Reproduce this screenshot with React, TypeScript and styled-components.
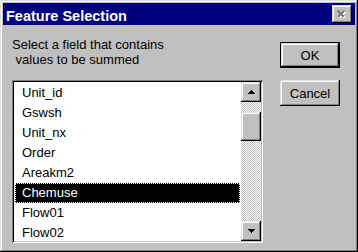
import styled, { createGlobalStyle, css } from 'styled-components';

const GlobalStyle = createGlobalStyle`
  body {
    margin: 0;
    font-family: "Liberation Sans", Arial, sans-serif;
  }
`;

const raised = css`
  box-shadow:
    inset -1px -1px #000,
    inset 1px 1px #dfdfdf,
    inset -2px -2px #808080,
    inset 2px 2px #fff;
`;

const WindowStyled = styled.div`
  width: 358px;
  height: 252px;
  box-sizing: border-box;
  padding: 3px;
  background: #c0c0c0;
  display: flex;
  flex-direction: column;
  ${raised}
`;

const TitleBarStyled = styled.div`
  height: 22px;
  flex-shrink: 0;
  background: #000080;
  display: flex;
  align-items: center;
  justify-content: space-between;
  padding: 0 3px;
`;

const TitleStyled = styled.span`
  color: #fff;
  font-weight: 700;
  font-size: 14.5px;
  line-height: 16px;
  padding-top: 4px;
`;

const CloseButtonStyled = styled.div`
  width: 20px;
  height: 18px;
  background: #c0c0c0;
  display: flex;
  align-items: center;
  justify-content: center;
  ${raised}
`;

const BodyStyled = styled.div`
  flex: 1;
  display: flex;
  gap: 17px;
  padding: 12px 15px 6px 9px;
  min-height: 0;
`;

const LeftColumnStyled = styled.div`
  width: 251px;
  display: flex;
  flex-direction: column;
`;

const PromptStyled = styled.p`
  margin: 0 0 13px;
  font-size: 13px;
  line-height: 15px;
  color: #000;
  white-space: pre;
`;

const ListBoxStyled = styled.div`
  flex: 1;
  min-height: 0;
  background: #fff;
  display: flex;
  padding: 2px;
  box-shadow:
    inset 1px 1px #808080,
    inset -1px -1px #fff,
    inset 2px 2px #000,
    inset -2px -2px #c0c0c0;
`;

const ItemsStyled = styled.ul`
  flex: 1;
  margin: 0;
  padding: 1px;
  list-style: none;
  overflow: hidden;
`;

const ItemStyled = styled.li<{ $selected?: boolean }>`
  height: 20px;
  box-sizing: border-box;
  border: 1px ${(p) => (p.$selected ? 'dotted #fff' : 'solid transparent')};
  padding-left: 6px;
  font-size: 13px;
  line-height: 18px;
  color: ${(p) => (p.$selected ? '#fff' : '#000')};
  background: ${(p) => (p.$selected ? '#000' : 'transparent')};
`;

const ScrollBarStyled = styled.div`
  width: 20px;
  display: flex;
  flex-direction: column;
  background: repeating-conic-gradient(#c0c0c0 0 25%, #fff 0 50%) 0 0 / 2px 2px;
`;

const ScrollButtonStyled = styled.div`
  height: 20px;
  flex-shrink: 0;
  background: #c0c0c0;
  display: flex;
  align-items: center;
  justify-content: center;
  ${raised}
`;

const ThumbStyled = styled.div`
  height: 29px;
  margin-top: 10px;
  background: #c0c0c0;
  ${raised}
`;

const SpacerStyled = styled.div`
  flex: 1;
`;

const ButtonColumnStyled = styled.div`
  display: flex;
  flex-direction: column;
  gap: 12px;
  padding-top: 5px;
`;

const ButtonStyled = styled.div<{ $default?: boolean }>`
  width: 60px;
  height: 26px;
  box-sizing: border-box;
  background: #c0c0c0;
  display: flex;
  align-items: center;
  justify-content: center;
  font-size: 13px;
  color: #000;
  border: ${(p) => (p.$default ? '1px solid #000' : 'none')};
  ${raised}
`;

const Arrow = ({ down }: { down?: boolean }) => (
  <svg width="7" height="4" viewBox="0 0 7 4" shapeRendering="crispEdges">
    <path d={down ? 'M0 0h7v1h-1v1h-1v1h-1v1h-1v-1h-1v-1h-1v-1h-1z' : 'M3 0h1v1h1v1h1v1h1v1h-7v-1h1v-1h1v-1h1z'} fill="#000" />
  </svg>
);

const CloseIcon = () => (
  <svg width="10" height="9" viewBox="0 0 10 9" shapeRendering="crispEdges">
    <path d="M2 2l6 6M8 2l-6 6" stroke="#fff" strokeWidth="2" />
    <path d="M1 1l6 6M7 1l-6 6" stroke="#808080" strokeWidth="2" />
  </svg>
);

const fields = ['Unit_id', 'Gswsh', 'Unit_nx', 'Order', 'Areakm2', 'Chemuse', 'Flow01', 'Flow02'];

const App = () => {
  return (
    <>
      <GlobalStyle />
      <WindowStyled>
        <TitleBarStyled>
          <TitleStyled>Feature Selection</TitleStyled>
          <CloseButtonStyled>
            <CloseIcon />
          </CloseButtonStyled>
        </TitleBarStyled>
        <BodyStyled>
          <LeftColumnStyled>
            <PromptStyled>
              {'Select a field that contains\n values to be summed'}
            </PromptStyled>
            <ListBoxStyled>
              <ItemsStyled>
                {fields.map((f) => (
                  <ItemStyled key={f} $selected={f === 'Chemuse'}>
                    {f}
                  </ItemStyled>
                ))}
              </ItemsStyled>
              <ScrollBarStyled>
                <ScrollButtonStyled>
                  <Arrow />
                </ScrollButtonStyled>
                <ThumbStyled />
                <SpacerStyled />
                <ScrollButtonStyled>
                  <Arrow down />
                </ScrollButtonStyled>
              </ScrollBarStyled>
            </ListBoxStyled>
          </LeftColumnStyled>
          <ButtonColumnStyled>
            <ButtonStyled $default>OK</ButtonStyled>
            <ButtonStyled>Cancel</ButtonStyled>
          </ButtonColumnStyled>
        </BodyStyled>
      </WindowStyled>
    </>
  );
};

export default App;
